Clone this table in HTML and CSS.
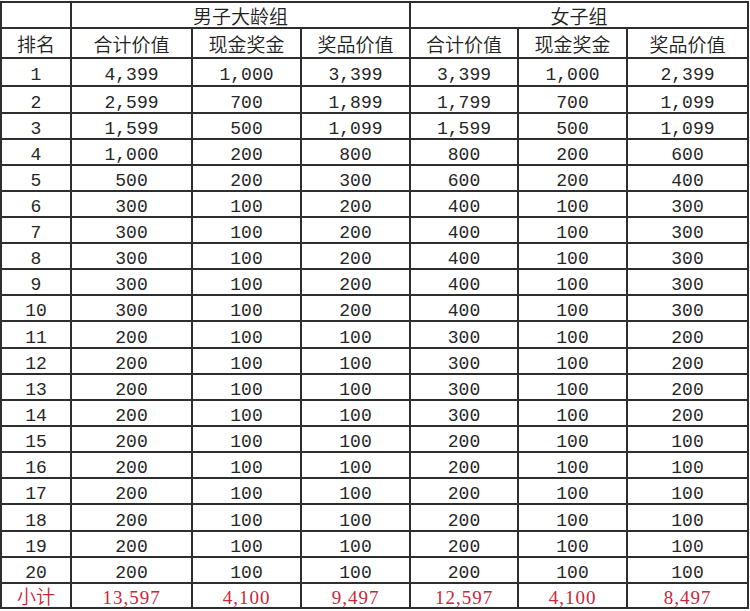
FILE: index.html
```html
<!DOCTYPE html>
<html lang="zh">
<head>
<meta charset="utf-8">
<link rel="stylesheet" href="styles.css">
</head>
<body>
<div class="sheet">
  <div class="c"></div>
  <div class="c hd span3">男子大龄组</div>
  <div class="c hd span3">女子组</div>

  <div class="c hd">排名</div>
  <div class="c hd">合计价值</div>
  <div class="c hd">现金奖金</div>
  <div class="c hd">奖品价值</div>
  <div class="c hd">合计价值</div>
  <div class="c hd">现金奖金</div>
  <div class="c hd">奖品价值</div>

  <div class="c n">1</div><div class="c n">4,399</div><div class="c n">1,000</div><div class="c n">3,399</div><div class="c n">3,399</div><div class="c n">1,000</div><div class="c n">2,399</div>
  <div class="c n">2</div><div class="c n">2,599</div><div class="c n">700</div><div class="c n">1,899</div><div class="c n">1,799</div><div class="c n">700</div><div class="c n">1,099</div>
  <div class="c n">3</div><div class="c n">1,599</div><div class="c n">500</div><div class="c n">1,099</div><div class="c n">1,599</div><div class="c n">500</div><div class="c n">1,099</div>
  <div class="c n">4</div><div class="c n">1,000</div><div class="c n">200</div><div class="c n">800</div><div class="c n">800</div><div class="c n">200</div><div class="c n">600</div>
  <div class="c n">5</div><div class="c n">500</div><div class="c n">200</div><div class="c n">300</div><div class="c n">600</div><div class="c n">200</div><div class="c n">400</div>
  <div class="c n">6</div><div class="c n">300</div><div class="c n">100</div><div class="c n">200</div><div class="c n">400</div><div class="c n">100</div><div class="c n">300</div>
  <div class="c n">7</div><div class="c n">300</div><div class="c n">100</div><div class="c n">200</div><div class="c n">400</div><div class="c n">100</div><div class="c n">300</div>
  <div class="c n">8</div><div class="c n">300</div><div class="c n">100</div><div class="c n">200</div><div class="c n">400</div><div class="c n">100</div><div class="c n">300</div>
  <div class="c n">9</div><div class="c n">300</div><div class="c n">100</div><div class="c n">200</div><div class="c n">400</div><div class="c n">100</div><div class="c n">300</div>
  <div class="c n">10</div><div class="c n">300</div><div class="c n">100</div><div class="c n">200</div><div class="c n">400</div><div class="c n">100</div><div class="c n">300</div>
  <div class="c n">11</div><div class="c n">200</div><div class="c n">100</div><div class="c n">100</div><div class="c n">300</div><div class="c n">100</div><div class="c n">200</div>
  <div class="c n">12</div><div class="c n">200</div><div class="c n">100</div><div class="c n">100</div><div class="c n">300</div><div class="c n">100</div><div class="c n">200</div>
  <div class="c n">13</div><div class="c n">200</div><div class="c n">100</div><div class="c n">100</div><div class="c n">300</div><div class="c n">100</div><div class="c n">200</div>
  <div class="c n">14</div><div class="c n">200</div><div class="c n">100</div><div class="c n">100</div><div class="c n">300</div><div class="c n">100</div><div class="c n">200</div>
  <div class="c n">15</div><div class="c n">200</div><div class="c n">100</div><div class="c n">100</div><div class="c n">200</div><div class="c n">100</div><div class="c n">100</div>
  <div class="c n">16</div><div class="c n">200</div><div class="c n">100</div><div class="c n">100</div><div class="c n">200</div><div class="c n">100</div><div class="c n">100</div>
  <div class="c n">17</div><div class="c n">200</div><div class="c n">100</div><div class="c n">100</div><div class="c n">200</div><div class="c n">100</div><div class="c n">100</div>
  <div class="c n">18</div><div class="c n">200</div><div class="c n">100</div><div class="c n">100</div><div class="c n">200</div><div class="c n">100</div><div class="c n">100</div>
  <div class="c n">19</div><div class="c n">200</div><div class="c n">100</div><div class="c n">100</div><div class="c n">200</div><div class="c n">100</div><div class="c n">100</div>
  <div class="c n">20</div><div class="c n">200</div><div class="c n">100</div><div class="c n">100</div><div class="c n">200</div><div class="c n">100</div><div class="c n">100</div>

  <div class="c tot cjk">小计</div><div class="c tot">13,597</div><div class="c tot">4,100</div><div class="c tot">9,497</div><div class="c tot">12,597</div><div class="c tot">4,100</div><div class="c tot">8,497</div>
</div>
</body>
</html>
```
FILE: styles.css
```css
html, body {
  margin: 0;
  padding: 0;
  background: #ffffff;
}

.sheet {
  display: grid;
  grid-template-columns: 70px 121px 109px 109px 108px 109px 121px;
  grid-template-rows: 26px 30px 28px 27px repeat(8, 26px) 27px repeat(6, 26px) 27px 26px 26px 25px;
  width: 749px;
  box-sizing: border-box;
  margin-top: 1px;
  border-top: 2px solid #2e2e2e;
  border-left: 2px solid #2e2e2e;
  color: #1e1e1e;
}

.c {
  box-sizing: border-box;
  border-right: 2px solid #2e2e2e;
  border-bottom: 2px solid #2e2e2e;
  display: flex;
  align-items: center;
  justify-content: center;
  white-space: nowrap;
}

.span3 {
  grid-column: span 3;
}

.hd {
  font-family: "Noto Sans CJK SC", "Noto Sans", sans-serif;
  font-weight: 350;
  font-size: 19px;
  line-height: 20px;
  padding-top: 2px;
  color: #222;
}

.n {
  font-family: "Liberation Mono", monospace;
  font-size: 18px;
  line-height: 18px;
  padding-top: 6px;
  color: #262626;
}

.tot {
  font-family: "Liberation Serif", serif;
  font-size: 19px;
  line-height: 19px;
  letter-spacing: 1px;
  padding-top: 3px;
  color: #c8283a;
}

.tot.cjk {
  font-family: "Noto Sans CJK SC", sans-serif;
  font-weight: 350;
  font-size: 19px;
  letter-spacing: 0;
  padding-top: 0;
}
```
